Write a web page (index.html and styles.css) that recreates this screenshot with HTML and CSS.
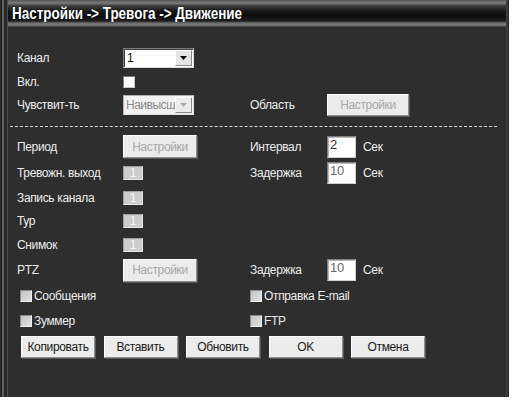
FILE: index.html
```html
<!DOCTYPE html>
<html lang="ru">
<head>
<meta charset="utf-8">
<title>Движение</title>
<link rel="stylesheet" href="styles.css">
</head>
<body>
<div class="window">
  <div class="titlebar"><span class="title">Настройки -&gt; Тревога -&gt; Движение</span></div>
  <div class="form">
    <div class="row h25">
      <span class="lbl">Канал</span>
      <div class="select"><span class="val">1</span><span class="drop"><svg width="7" height="4" viewBox="0 0 7 4"><path d="M0 0H7L3.5 4Z" fill="#000"/></svg></span></div>
    </div>
    <div class="row h24">
      <span class="lbl">Вкл.</span>
      <span class="check white"></span>
    </div>
    <div class="row h22">
      <span class="lbl">Чувствит-ть</span>
      <div class="select disabled"><span class="val">Наивысш</span><span class="drop"><svg width="7" height="4" viewBox="0 0 7 4"><path d="M0 0H7L3.5 4Z" fill="#a8a8a8"/></svg></span></div>
      <span class="lbl">Область</span>
      <span class="btn dis wide">Настройки</span>
    </div>
    <div class="divider"></div>
    <div class="row h25">
      <span class="lbl">Период</span>
      <span class="btn dis">Настройки</span>
      <span class="lbl">Интервал</span>
      <span class="field"><span class="input dark">2</span><span class="lbl">Сек</span></span>
    </div>
    <div class="row h28">
      <span class="lbl">Тревожн. выход</span>
      <span class="box">1</span>
      <span class="lbl">Задержка</span>
      <span class="field"><span class="input">10</span><span class="lbl">Сек</span></span>
    </div>
    <div class="row h22">
      <span class="lbl">Запись канала</span>
      <span class="box">1</span>
    </div>
    <div class="row h23">
      <span class="lbl">Тур</span>
      <span class="box">1</span>
    </div>
    <div class="row h25">
      <span class="lbl">Снимок</span>
      <span class="box">1</span>
    </div>
    <div class="row h26">
      <span class="lbl">PTZ</span>
      <span class="btn dis">Настройки</span>
      <span class="lbl">Задержка</span>
      <span class="field"><span class="input">10</span><span class="lbl">Сек</span></span>
    </div>
    <div class="row h25">
      <label class="opt left"><span class="check gray"></span>Сообщения</label>
      <label class="opt right"><span class="check gray"></span>Отправка E-mail</label>
    </div>
    <div class="row h26">
      <label class="opt left"><span class="check gray"></span>Зуммер</label>
      <label class="opt right"><span class="check gray"></span>FTP</label>
    </div>
    <div class="actions">
      <span class="btn act">Копировать</span>
      <span class="btn act">Вставить</span>
      <span class="btn act">Обновить</span>
      <span class="btn act">OK</span>
      <span class="btn act">Отмена</span>
    </div>
  </div>
</div>
</body>
</html>
```

FILE: styles.css
```css
html, body {
  margin: 0;
  background: #ffffff;
}
body {
  font-family: "Liberation Sans", Arial, sans-serif;
  font-size: 12px;
  letter-spacing: -0.35px;
}
.window {
  width: 509px;
  height: 397px;
  display: flex;
  flex-direction: column;
  background:
    linear-gradient(to right, #262626 0, #262626 2px, #5c5c5c 2px, #5c5c5c 4px, #282828 4px, #282828 7px, #4c4c4c 7px, #4c4c4c 8px, transparent 8px),
    linear-gradient(to left, #272727 0, #272727 1px, #3d3d3d 1px, #3d3d3d 3px, transparent 3px),
    #2e2e2e;
}
.titlebar {
  height: 27px;
  margin-left: 8px;
  margin-right: 3px;
  display: flex;
  align-items: center;
  padding-left: 4px;
  background: linear-gradient(to bottom, #555 0, #7c7c7c 3px, #3a3a3a 6px, #141414 12px, #0c0c0c 16px, #1e1e1e 21px, #6c6c6c 23px, #7e7e7e 25px, #3a3a3a 27px);
}
.title {
  color: #ffffff;
  font-weight: bold;
  font-size: 16px;
  letter-spacing: 0;
  display: inline-block;
  transform: scaleX(0.84);
  transform-origin: left center;
  white-space: nowrap;
  text-shadow: 0 0 1px #000;
}
.form {
  margin-top: 18px;
  padding-left: 17px;
  display: flex;
  flex-direction: column;
}
.row {
  display: grid;
  grid-template-columns: 106px 127px 77px auto;
  align-items: center;
  justify-items: start;
}
.h22 { height: 22px; }
.h23 { height: 23px; }
.h24 { height: 24px; }
.h25 { height: 25px; }
.h26 { height: 26px; }
.h28 { height: 28px; }
.lbl {
  color: #ececec;
  white-space: nowrap;
}
.select {
  box-sizing: border-box;
  width: 71px;
  height: 20px;
  background: #fff;
  border: 1px solid;
  border-color: #7a7a7a #dcdcdc #dcdcdc #7a7a7a;
  box-shadow: inset 1px 1px 0 #404040;
  display: flex;
  align-items: center;
  justify-content: space-between;
  padding: 1px 1px 1px 3px;
  overflow: hidden;
}
.select .val {
  color: #000;
  font-size: 12px;
  overflow: hidden;
  white-space: nowrap;
  flex: 1;
}
.select .drop {
  box-sizing: border-box;
  width: 17px;
  height: 16px;
  flex: none;
  background: #e4e4e4;
  border: 1px solid;
  border-color: #fff #8a8a8a #8a8a8a #fff;
  display: flex;
  align-items: center;
  justify-content: center;
}
.select.disabled {
  background: #f2f2f2;
  box-shadow: none;
  border-color: #b0b0b0 #e0e0e0 #e0e0e0 #b0b0b0;
  padding-left: 2px;
}
.select.disabled .val {
  color: #8c8c8c;
  letter-spacing: -0.5px;
}
.select.disabled .drop {
  background: #ececec;
}
.check {
  box-sizing: border-box;
  width: 12px;
  height: 12px;
  display: inline-block;
  flex: none;
}
.check.white {
  background: #fff;
  border: 1px solid;
  border-color: #7a7a7a #c8c8c8 #c8c8c8 #7a7a7a;
}
.check.gray {
  background: linear-gradient(135deg, #c4c4c4, #e2e2e2);
  border: 1px solid;
  border-color: #8a8a8a #f0f0f0 #f0f0f0 #8a8a8a;
}
.btn {
  box-sizing: border-box;
  display: flex;
  align-items: center;
  justify-content: center;
  background: #ececec;
  border: 1px solid;
  border-color: #ffffff #8c8c8c #8c8c8c #ffffff;
  box-shadow: 1px 1px 0 #555;
  white-space: nowrap;
}
.btn.dis {
  width: 74px;
  height: 23px;
  color: #a6a6a6;
}
.btn.dis.wide {
  width: 82px;
  height: 22px;
}
.box {
  box-sizing: border-box;
  width: 20px;
  height: 14px;
  background: #cdcdcd;
  border: 1px solid;
  border-color: #a0a0a0 #e6e6e6 #e6e6e6 #a0a0a0;
  color: #f6f6f6;
  font-size: 12px;
  line-height: 12px;
  text-align: center;
}
.field {
  display: flex;
  align-items: center;
  gap: 7px;
}
.input {
  box-sizing: border-box;
  width: 29px;
  height: 22px;
  background: #fff;
  border: 1px solid;
  border-color: #808080 #d0d0d0 #d0d0d0 #808080;
  box-shadow: inset 1px 1px 0 #b8b8b8;
  color: #6a6a6a;
  font-size: 13px;
  line-height: 15px;
  padding-left: 2px;
}
.input.dark {
  color: #333;
}
.divider {
  height: 18px;
  margin-left: -7px;
  width: 487px;
  box-sizing: border-box;
  padding-top: 10px;
}
.divider::before {
  content: "";
  display: block;
  border-top: 1px dashed #d8d8d8;
}
.opt {
  display: flex;
  align-items: center;
  gap: 2px;
  color: #ececec;
  white-space: nowrap;
}
.opt.left {
  grid-column: 1 / 3;
  margin-left: 3px;
}
.opt.right {
  grid-column: 3 / 5;
}
.actions {
  height: 26px;
  display: flex;
  align-items: center;
  gap: 8.5px;
  margin-left: 4px;
}
.btn.act {
  width: 74px;
  height: 22px;
  color: #1a1a1a;
  font-size: 12px;
}
```
